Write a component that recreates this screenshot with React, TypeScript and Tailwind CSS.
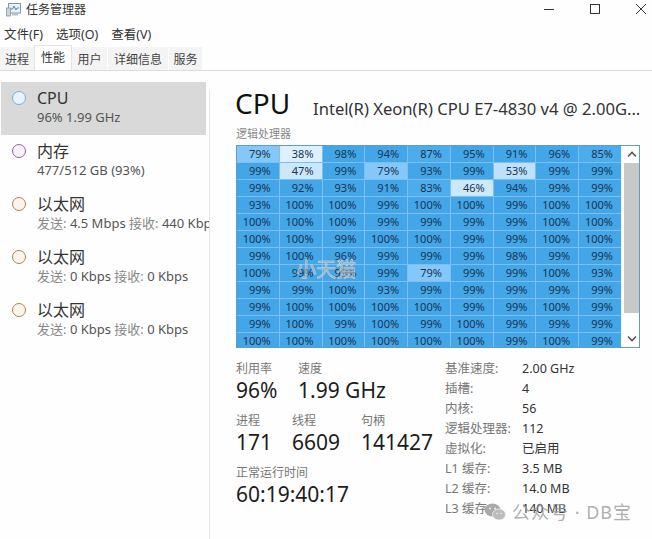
import React from "react";

const rows = [
  [79, 38, 98, 94, 87, 95, 91, 96, 85],
  [99, 47, 99, 79, 93, 99, 53, 99, 99],
  [99, 92, 93, 91, 83, 46, 94, 99, 99],
  [93, 100, 100, 99, 100, 100, 99, 100, 100],
  [100, 100, 100, 99, 99, 99, 99, 100, 100],
  [100, 100, 99, 100, 100, 99, 99, 100, 100],
  [99, 100, 96, 99, 99, 99, 98, 99, 99],
  [100, 99, 99, 99, 79, 99, 99, 100, 93],
  [99, 99, 100, 93, 99, 99, 99, 99, 99],
  [99, 100, 100, 100, 100, 99, 99, 100, 99],
  [99, 100, 99, 100, 99, 100, 99, 99, 99],
  [100, 100, 100, 100, 100, 100, 99, 100, 99],
];

function cellColor(v: number) {
  if (v >= 90) return "#42a6e8";
  if (v >= 80) return "#4cacec";
  const t = (80 - v) / 42;
  const r = Math.round(130 + t * 92);
  const g = Math.round(198 + t * 42);
  const b = Math.round(248 + t * 5);
  return `rgb(${r},${g},${b})`;
}

function SideItem({ title, sub, ring, fill, active }: { title: string; sub: React.ReactNode; ring: string; fill: string; active?: boolean }) {
  return (
    <div className={`flex h-[53px] pl-[11px] pt-[5px] ${active ? "w-[205px] bg-[#d9d9d9]" : "w-[208px]"}`}>
      <div className={`mt-[4px] h-[14px] w-[14px] shrink-0 rounded-full border-[1.5px] ${ring} ${fill}`} />
      <div className="ml-[11px] min-w-0 overflow-hidden whitespace-nowrap">
        <div className="h-[22px] text-[16px] leading-[22px] text-[#333]">{title}</div>
        <div className="text-[13px] leading-[17px] text-[#555]">{sub}</div>
      </div>
    </div>
  );
}

function Stat({ label, value, className }: { label: string; value: string; className: string }) {
  return (
    <div className={className}>
      <div className="text-[12px] leading-[17px] text-[#777]">{label}</div>
      <div className="text-[21px] leading-[26px] whitespace-nowrap text-[#1c1c1c]">{value}</div>
    </div>
  );
}

const specs = [
  ["基准速度:", "2.00 GHz"],
  ["插槽:", "4"],
  ["内核:", "56"],
  ["逻辑处理器:", "112"],
  ["虚拟化:", "已启用"],
  ["L1 缓存:", "3.5 MB"],
  ["L2 缓存:", "14.0 MB"],
  ["L3 缓存:", "140 MB"],
];

const net = (a: string, b: string) => (
  <>
    <span className="text-[#888]">发送:</span> {a} <span className="text-[#888]">接收:</span> {b}
  </>
);

export default function App() {
  return (
    <div className="relative h-[539px] w-[652px] overflow-hidden bg-[#fefefe] text-[#222]" style={{ fontFamily: '"Noto Sans", "Noto Sans CJK SC", sans-serif' }}>
      {/* Title bar */}
      <div className="flex h-[22px] items-center pb-[2px] pl-[6px]">
        <svg width="16" height="16" viewBox="0 0 16 16" className="shrink-0">
          <rect x="2.5" y="1.5" width="12" height="9.5" fill="#e8f2f8" stroke="#7d98ab" />
          <path d="M4 7 L6.5 7 L8 4 L10 8 L11 6 L13 6" fill="none" stroke="#4f86b0" strokeWidth="1" />
          <rect x="0.5" y="6" width="4" height="8" fill="#c9d4dc" stroke="#8a9aa6" strokeWidth="0.8" />
          <path d="M6 11 L6 13.5 L12 13.5 L12 11" fill="#b4c0c8" />
        </svg>
        <span className="ml-[4px] text-[12px] leading-[18px] text-[#333]">任务管理器</span>
        <div className="-mt-[2px] ml-auto flex items-center">
          <svg width="12" height="12" viewBox="0 0 12 12" className="mr-[34px]"><path d="M1 6.5 H11" stroke="#333" strokeWidth="1" /></svg>
          <svg width="12" height="12" viewBox="0 0 12 12" className="mr-[34px]"><rect x="1.5" y="1.5" width="9" height="9" fill="none" stroke="#333" strokeWidth="1" /></svg>
          <svg width="12" height="12" viewBox="0 0 12 12" className="mr-[5px]"><path d="M1 1 L11 11 M11 1 L1 11" stroke="#334" strokeWidth="1" /></svg>
        </div>
      </div>
      {/* Menu */}
      <div className="flex h-[23px] items-center gap-[13px] pl-[4px] pt-[2px] text-[12.5px] leading-[18px] text-[#333]">
        <span>文件(F)</span>
        <span>选项(O)</span>
        <span>查看(V)</span>
      </div>
      {/* Tabs */}
      <div className="flex h-[26px] items-end border-b border-[#dcdcdc] text-[12px] leading-[18px] text-[#444]">
        <div className="flex h-[23px] w-[34px] items-center justify-center bg-[#f4f4f4] pt-[3px]">进程</div>
        <div className="flex h-[25px] w-[38px] items-start justify-center border-x border-t border-[#e4e4e4] bg-white pt-[3px] text-[#333]">性能</div>
        <div className="flex h-[23px] w-[35px] items-center justify-center bg-[#f4f4f4] pt-[3px]">用户</div>
        <div className="ml-[1px] flex h-[23px] w-[60px] items-center justify-center bg-[#f4f4f4] pt-[3px]">详细信息</div>
        <div className="ml-[1px] flex h-[23px] w-[33px] items-center justify-center bg-[#f4f4f4] pt-[3px]">服务</div>
      </div>
      <div className="flex">
        {/* Sidebar */}
        <div className="h-[468px] w-[209px] shrink-0 overflow-hidden pl-[1px] pt-[11px]">
          <SideItem active title="CPU" sub="96% 1.99 GHz" ring="border-[#78aedc]" fill="bg-[#eaf3fb]" />
          <SideItem title="内存" sub="477/512 GB (93%)" ring="border-[#9a5cb0]" fill="bg-[#f8f2fa]" />
          <SideItem title="以太网" sub={net("4.5 Mbps", "440 Kbps")} ring="border-[#b88050]" fill="bg-[#fbf5ec]" />
          <SideItem title="以太网" sub={net("0 Kbps", "0 Kbps")} ring="border-[#b88050]" fill="bg-[#fbf5ec]" />
          <SideItem title="以太网" sub={net("0 Kbps", "0 Kbps")} ring="border-[#b88050]" fill="bg-[#fbf5ec]" />
        </div>
        <div className="mt-[19px] h-[449px] w-px shrink-0 bg-[#e6e6e6]" />
        {/* Main */}
        <div className="min-w-0 flex-1 pl-[26px]">
          <div className="flex h-[55px] items-end whitespace-nowrap">
            <span className="mb-[4px] -ml-[1px] text-[28px] leading-[38px] text-[#111]">CPU</span>
            <span className="mb-[5px] ml-[23px] text-[16.6px] leading-[24px] text-[#333]">Intel(R) Xeon(R) CPU E7-4830 v4 @ 2.00G...</span>
          </div>
          <div className="h-[19px] text-[11px] leading-[15px] text-[#888]">逻辑处理器</div>
          <div className="relative flex h-[203px] w-[404px] overflow-hidden border border-[#5b9fc4] bg-white">
            <div className="grid h-full w-[384px] grid-cols-9 grid-rows-[repeat(12,16px)] gap-[1px] overflow-hidden bg-[#7dbfee]">
              {rows.flat().map((v, i) => (
                <div key={i} className="overflow-hidden pr-[8px] text-right text-[11px] leading-[16px] text-[#1a3450]" style={{ backgroundColor: cellColor(v) }}>
                  {v}%
                </div>
              ))}
            </div>
            <div className="flex w-[18px] flex-col items-end bg-white">
              <div className="flex h-[17px] w-[15px] items-center justify-center">
                <svg width="10" height="7" viewBox="0 0 10 7"><path d="M1 5.5 L5 1.5 L9 5.5" fill="none" stroke="#555" strokeWidth="1.6" /></svg>
              </div>
              <div className="h-[150px] w-[15px] bg-[#c8c8c8]" />
              <div className="flex w-[15px] flex-1 items-end justify-center pb-[5px]">
                <svg width="10" height="7" viewBox="0 0 10 7"><path d="M1 1.5 L5 5.5 L9 1.5" fill="none" stroke="#555" strokeWidth="1.6" /></svg>
              </div>
            </div>
            <div className="absolute left-[59px] top-[112px] text-[20px] leading-[24px] text-white/20" style={{ WebkitTextStroke: "0.5px #f0cdb0" }}>小天猫</div>
          </div>
          <div className="flex pt-[12px]">
            <div className="w-[209px]">
              <div className="flex">
                <Stat label="利用率" value="96%" className="w-[62px]" />
                <Stat label="速度" value="1.99 GHz" className="" />
              </div>
              <div className="mt-[9px] flex">
                <Stat label="进程" value="171" className="w-[56px]" />
                <Stat label="线程" value="6609" className="w-[69px]" />
                <Stat label="句柄" value="141427" className="" />
              </div>
              <div className="mt-[9px]">
                <Stat label="正常运行时间" value="60:19:40:17" className="" />
              </div>
            </div>
            <div className="-mt-[1px] grid grid-cols-[77px_auto] content-start text-[12.5px] leading-[20px]">
              {specs.map(([k, v]) => (
                <React.Fragment key={k}>
                  <div className="whitespace-nowrap text-[#777]">{k}</div>
                  <div className="whitespace-nowrap text-[#333]">{v}</div>
                </React.Fragment>
              ))}
            </div>
          </div>
        </div>
      </div>
      {/* WeChat-style watermark */}
      <div className="absolute left-[484px] top-[501px] flex items-center text-[18px] leading-[22px] tracking-[1px] text-[#9a9a9a]/80">
        <svg width="22" height="20" viewBox="0 0 22 20" className="mr-[6px]">
          <ellipse cx="8.5" cy="8" rx="8" ry="6.5" fill="#a9a9a9" />
          <ellipse cx="15" cy="12.5" rx="6.5" ry="5.5" fill="#bcbcbc" stroke="#f4f4f4" strokeWidth="0.8" />
          <circle cx="6" cy="6.5" r="1" fill="#f0f0f0" />
          <circle cx="11" cy="6.5" r="1" fill="#f0f0f0" />
          <circle cx="13" cy="11.5" r="0.8" fill="#f0f0f0" />
          <circle cx="17" cy="11.5" r="0.8" fill="#f0f0f0" />
        </svg>
        <span>公众号 · DB宝</span>
      </div>
    </div>
  );
}
